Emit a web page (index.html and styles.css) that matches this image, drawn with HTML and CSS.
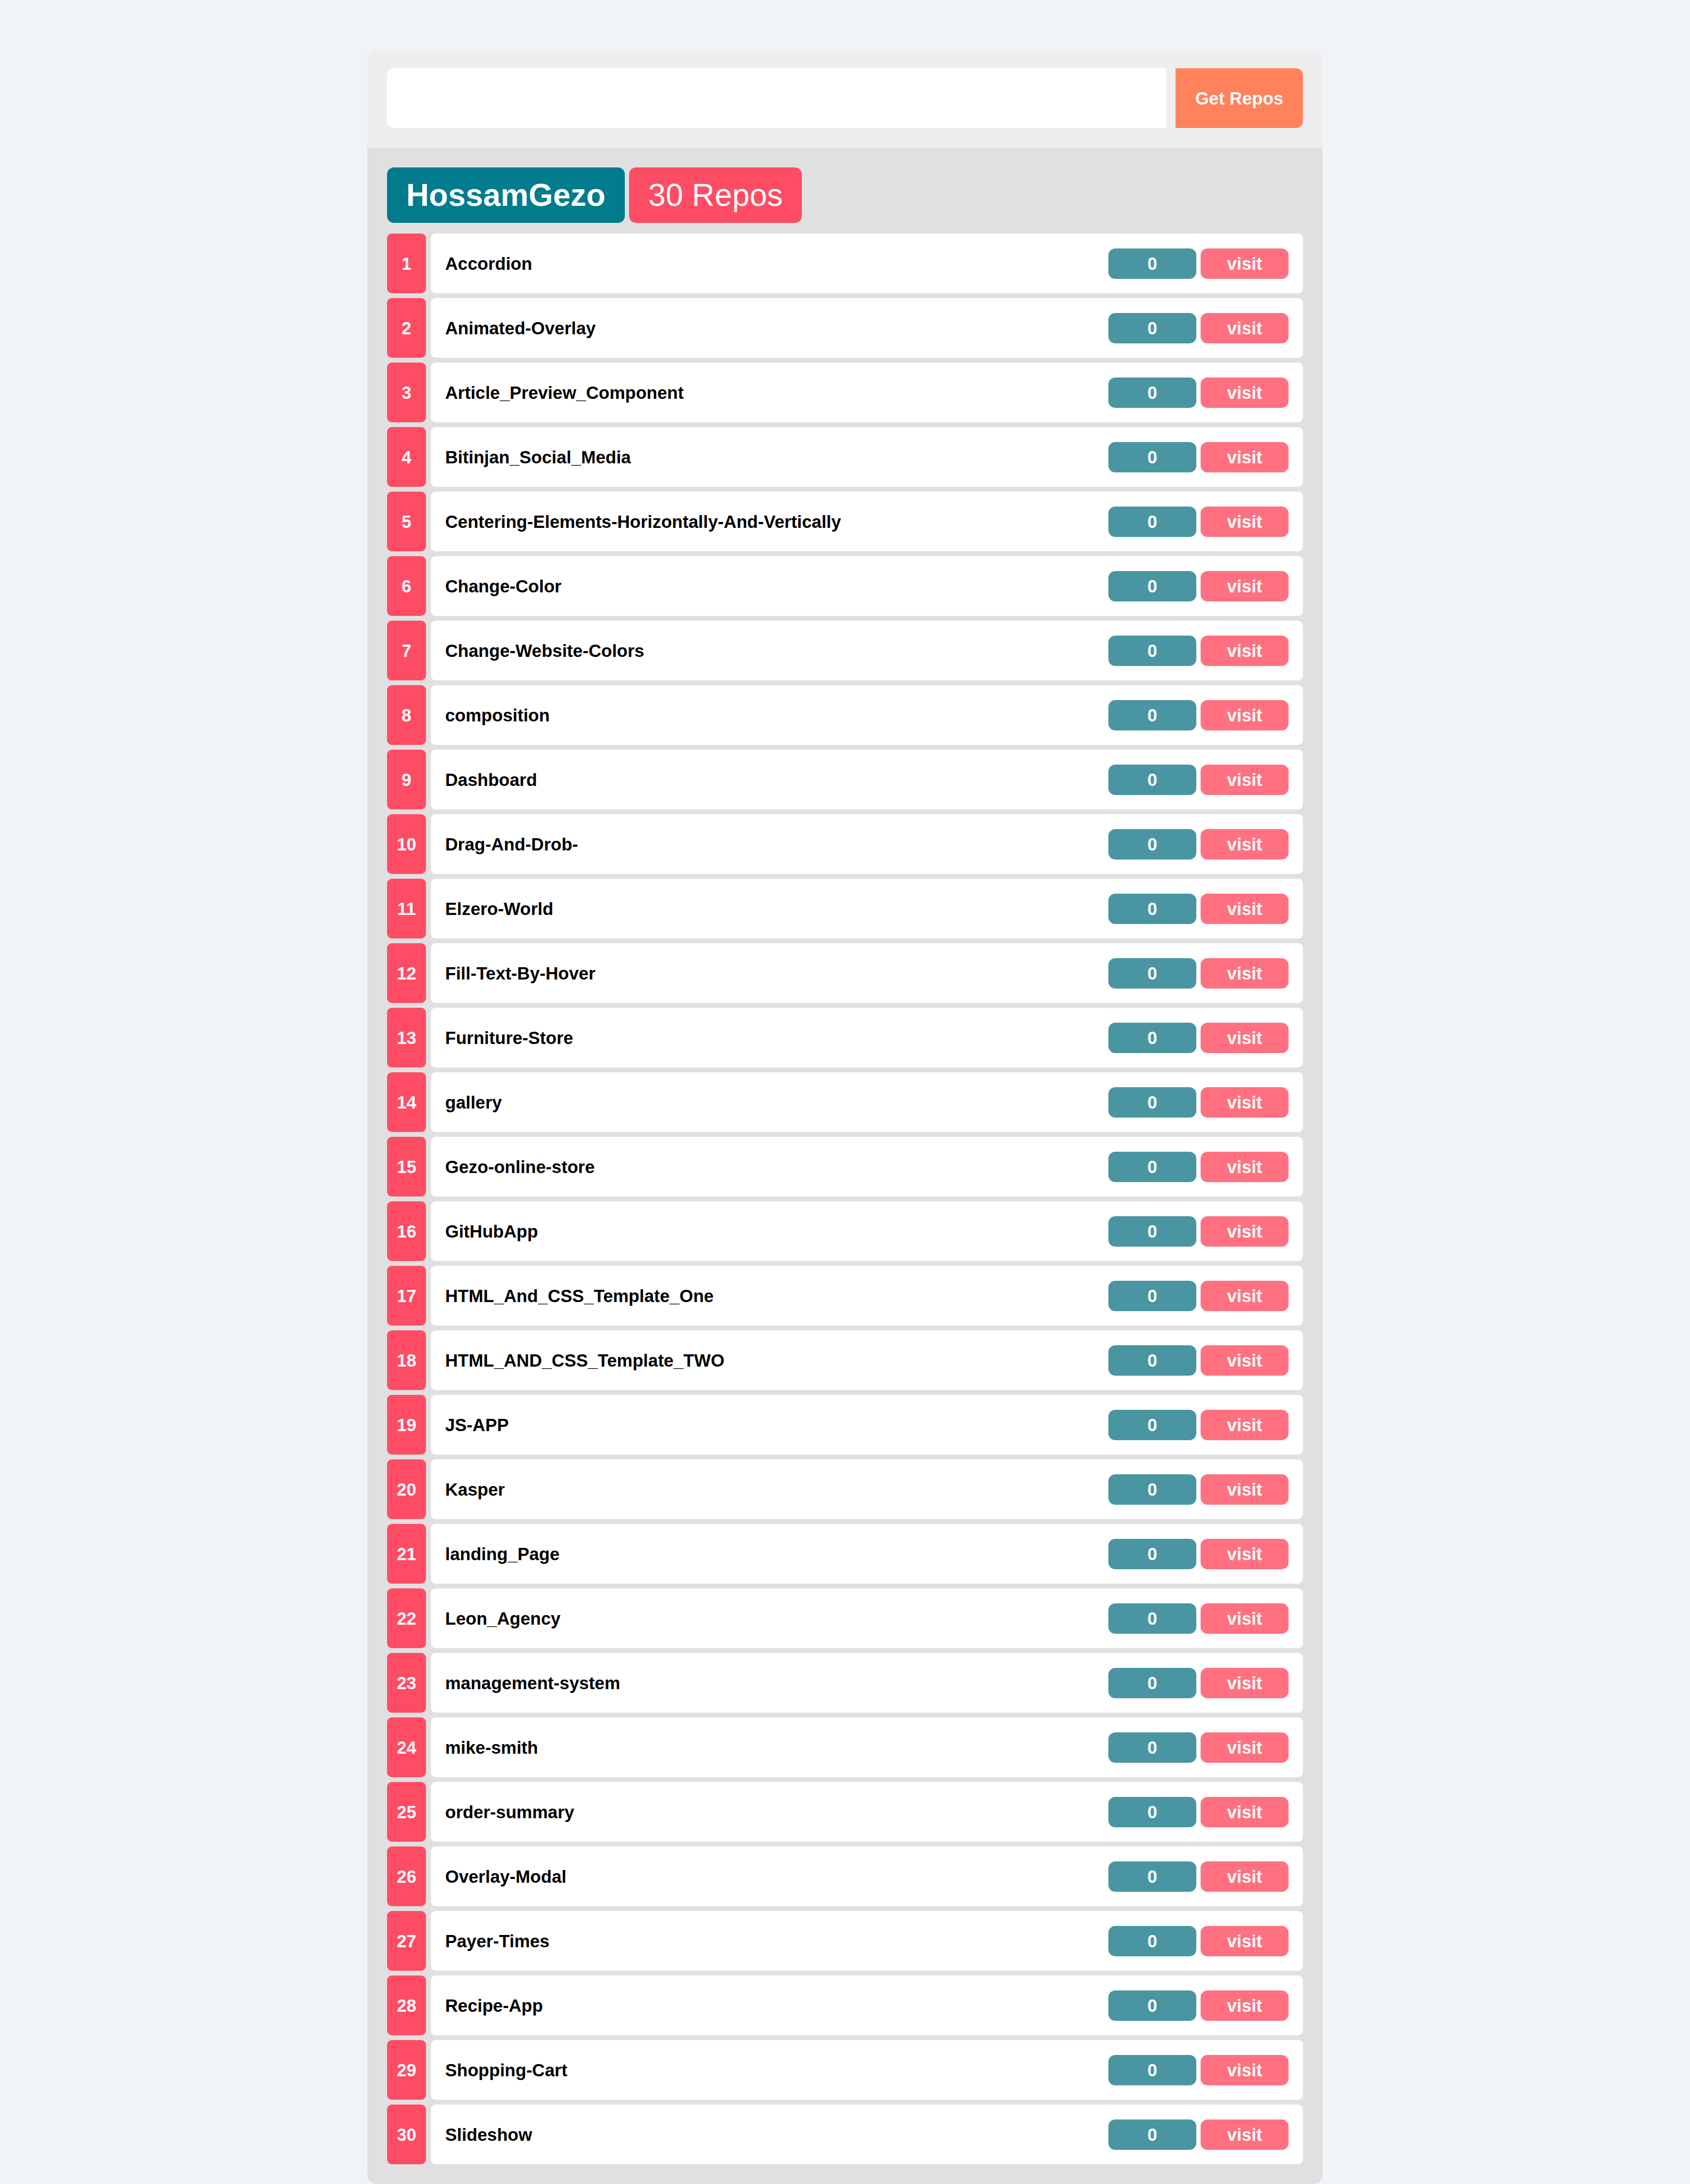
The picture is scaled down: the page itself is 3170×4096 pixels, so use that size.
FILE: index.html
```
<!DOCTYPE html>
<html lang="en">
<head>
  <meta charset="utf-8">
  <meta name="viewport" content="width=device-width, initial-scale=1">
  <title>GitHub Repos</title>
  <link rel="stylesheet" href="styles.css">
</head>
<body>
  <main class="app">
    <form class="search">
      <input class="search-input" type="text" name="username" aria-label="GitHub username">
      <button class="search-button" type="button">Get Repos</button>
    </form>
    <section class="results">
      <header class="summary">
        <h1 class="user">HossamGezo</h1>
        <p class="count">30 Repos</p>
      </header>
      <ol class="repos" id="repos"></ol>
    </section>
  </main>
  <script src="script.js"></script>
</body>
</html>
```
FILE: styles.css
```
* {
  box-sizing: border-box;
}

body {
  margin: 0;
  padding: 92px 20px 0;
  background: #f0f4f9;
  color: #000;
  font-family: "Liberation Sans", Arial, Helvetica, sans-serif;
  font-size: 33px;
  line-height: 37px;
}

.app {
  max-width: 1792px;
  margin: 0 auto;
  border-radius: 18px;
  overflow: hidden;
  background: #e0e0e0;
}

.search {
  display: flex;
  gap: 18px;
  padding: 36px 37px 37px;
  background: #eee;
}

.search-input,
.search-button {
  height: 112px;
  border: 0;
  outline: 0;
  font: inherit;
}

.search-input {
  flex: 1;
  min-width: 0;
  padding: 0 37px;
  border-radius: 13px 0 0 13px;
  background: #fff;
}

.search-button {
  padding: 0 37px;
  border-radius: 0 13px 13px 0;
  background: #ff825c;
  color: #fff;
  font-weight: bold;
  cursor: pointer;
}

.results {
  padding: 37px;
}

.summary {
  display: flex;
  flex-wrap: wrap;
  gap: 8px;
  margin-bottom: 20px;
}

.user,
.count {
  margin: 0;
  padding: 18px 36px;
  border-radius: 13px;
  color: #fff;
  font-size: 59px;
  line-height: 68px;
}

.user {
  background: #027b8d;
}

.count {
  background: #ff4c65;
}

.repos {
  display: flex;
  flex-direction: column;
  gap: 9px;
  margin: 0;
  padding: 0;
  list-style: none;
  font-weight: bold;
}

.repo {
  display: flex;
  gap: 9px;
  min-height: 112px;
}

.repo-index {
  display: flex;
  align-items: center;
  justify-content: center;
  width: 73px;
  border-radius: 9px;
  background: #ff4c65;
  color: #fff;
}

.repo-card {
  display: flex;
  flex: 1;
  align-items: center;
  gap: 8px;
  padding: 27px;
  border-radius: 9px;
  background: #fff;
}

.repo-name {
  flex: 1;
}

.stars,
.visit {
  width: 165px;
  padding: 10px 0;
  border-radius: 13px;
  color: #fff;
  text-align: center;
  text-decoration: none;
}

.stars {
  background: #4996a2;
}

.visit {
  background: #ff7181;
}
```
FILE: script.js
```
const repoNames = [
  "Accordion",
  "Animated-Overlay",
  "Article_Preview_Component",
  "Bitinjan_Social_Media",
  "Centering-Elements-Horizontally-And-Vertically",
  "Change-Color",
  "Change-Website-Colors",
  "composition",
  "Dashboard",
  "Drag-And-Drob-",
  "Elzero-World",
  "Fill-Text-By-Hover",
  "Furniture-Store",
  "gallery",
  "Gezo-online-store",
  "GitHubApp",
  "HTML_And_CSS_Template_One",
  "HTML_AND_CSS_Template_TWO",
  "JS-APP",
  "Kasper",
  "landing_Page",
  "Leon_Agency",
  "management-system",
  "mike-smith",
  "order-summary",
  "Overlay-Modal",
  "Payer-Times",
  "Recipe-App",
  "Shopping-Cart",
  "Slideshow"
];

function element(tag, className, text) {
  const node = document.createElement(tag);
  node.className = className;
  if (text !== undefined) node.textContent = text;
  return node;
}

const list = document.getElementById("repos");

repoNames.forEach((name, i) => {
  const row = element("li", "repo");
  const card = element("div", "repo-card");
  const visit = element("a", "visit", "visit");
  visit.href = "https://github.com/HossamGezo/" + name;
  card.append(element("span", "repo-name", name), element("span", "stars", "0"), visit);
  row.append(element("span", "repo-index", i + 1), card);
  list.append(row);
});
```
